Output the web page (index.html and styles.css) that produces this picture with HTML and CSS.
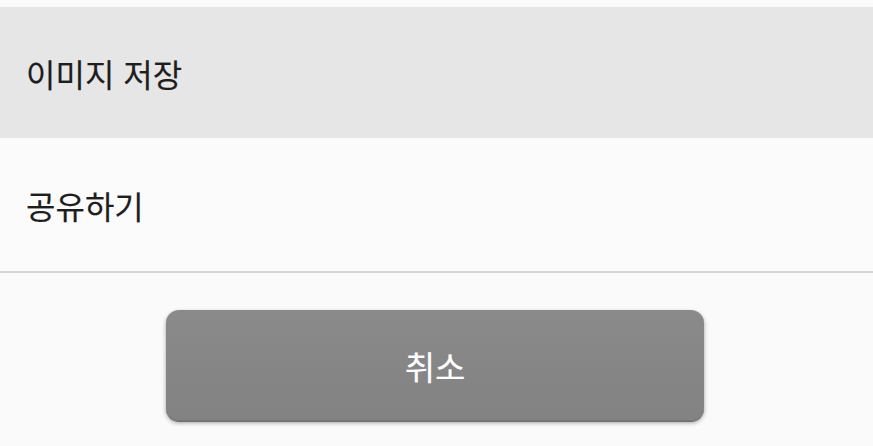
FILE: index.html
```html
<!DOCTYPE html>
<html lang="ko">
<head>
<meta charset="utf-8">
<link rel="stylesheet" href="styles.css">
</head>
<body>
<div class="sheet">
  <div class="item item-active">이미지 저장</div>
  <div class="item">공유하기</div>
  <div class="divider"></div>
  <div class="actions">
    <button class="cancel">취소</button>
  </div>
</div>
</body>
</html>
```
FILE: styles.css
```css
html, body {
  margin: 0;
  padding: 0;
  background: #fafafa;
}
body {
  width: 873px;
  height: 446px;
  overflow: hidden;
  font-family: "Noto Sans CJK KR", "Noto Sans", sans-serif;
}
.sheet {
  padding-top: 7px;
  display: flex;
  flex-direction: column;
}
.item {
  height: 132px;
  display: flex;
  align-items: center;
  padding-left: 26px;
  font-size: 32px;
  color: #1e1e1e;
  background: #fbfbfb;
  -webkit-text-stroke: 0.15px #1e1e1e;
}
.item-active {
  background: #e6e6e6;
  height: 131px;
}
.item + .item {
  height: 133px;
}
.divider {
  height: 2px;
  background: #d6d6d6;
}
.actions {
  display: flex;
  justify-content: center;
  padding-top: 37px;
}
.cancel {
  margin-left: -3px;
  width: 538px;
  height: 111px;
  border: none;
  border-radius: 13px;
  background: linear-gradient(#8a8a8a, #828282);
  box-shadow: 0 1px 0 #6e6e6e, 0 2px 4px rgba(0,0,0,0.35), inset 0 -1px 0 #777;
  color: #ffffff;
  font-family: "Noto Sans CJK KR", "Noto Sans", sans-serif;
  font-size: 33px;
  padding: 0;
  -webkit-text-stroke: 0.15px #ffffff;
}
```
